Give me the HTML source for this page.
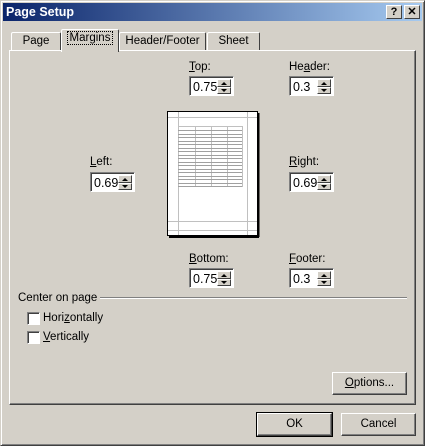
<!DOCTYPE html><html><head><style>
*{margin:0;padding:0;box-sizing:border-box}
body{width:425px;height:446px;background:#d4d0c8;font-family:"Liberation Sans",sans-serif;font-size:11.5px;color:#000;position:relative;overflow:hidden}
.a{position:absolute}
.frame{left:0;top:0;width:425px;height:446px;border:1px solid;border-color:#d4d0c8 #404040 #404040 #d4d0c8;box-shadow:inset 1px 1px #fff,inset -1px -1px #808080}
.title{left:3px;top:3px;width:419px;height:18px;background:linear-gradient(90deg,#0a246a,#a6caf0);color:#fff;font-weight:bold;font-size:12.5px;padding:2px 0 0 3px}
.tb{width:16px;height:14px;top:5px;background:#d4d0c8;border:1px solid;border-color:#fff #404040 #404040 #fff;font-weight:bold;font-size:11px;text-align:center;line-height:12px;color:#000}
.tab{top:32px;height:19px;border:1px solid;border-bottom:none;border-color:#fff #404040 #404040 #fff;border-radius:2px 2px 0 0;text-align:center;line-height:17px;background:#d4d0c8}
.panel{left:9px;top:50px;width:407px;height:355px;border:1px solid;border-color:#fff #404040 #404040 #fff;box-shadow:inset -1px -1px #808080}
.inp{width:45px;height:20px;background:#fff;border:1px solid;border-color:#808080 #fff #fff #808080;box-shadow:inset 1px 1px #404040;padding:3px 0 0 3px;font-size:12.5px;overflow:hidden;white-space:nowrap}
.sp{position:absolute;right:2px;top:2px;width:14px;height:15px;background:#d4d0c8}
.sp div{height:7.5px;border:1px solid;border-color:#fff #404040 #404040 #fff;position:relative}
.up:after,.dn:after{content:"";position:absolute;left:3px;top:1.5px;border-left:3px solid transparent;border-right:3px solid transparent}
.up:after{border-bottom:3px solid #000}
.dn:after{border-top:3px solid #000}
u{text-decoration:underline}
.btn{height:23px;border:1px solid;border-color:#fff #404040 #404040 #fff;box-shadow:inset -1px -1px #808080;text-align:center;line-height:20px}
.cb{width:13px;height:13px;background:#fff;border:1px solid;border-color:#808080 #fff #fff #808080;box-shadow:inset 1px 1px #404040}
</style></head><body>
<div class="a frame"></div>
<div class="a title">Page Setup</div>
<div class="a tb" style="left:386px">?</div>
<div class="a tb" style="left:404px">✕</div>
<div class="a tab" style="left:11px;width:50px">Page</div>
<div class="a tab" style="left:119px;width:87px">Header/Footer</div>
<div class="a tab" style="left:207px;width:53px">Sheet</div>
<div class="a panel"></div>
<div class="a tab" style="left:61px;width:58px;top:29px;height:23px;border-bottom:none;z-index:2"><span style="outline:1px dotted #000;padding:0 2px">Margins</span></div>

<div class="a" style="left:189px;top:61px"><u>T</u>op:</div>
<div class="a inp" style="left:189px;top:76px">0.75<div class="sp"><div class="up"></div><div class="dn"></div></div></div>
<div class="a" style="left:289px;top:61px">He<u>a</u>der:</div>
<div class="a inp" style="left:289px;top:76px">0.3<div class="sp"><div class="up"></div><div class="dn"></div></div></div>
<div class="a" style="left:90px;top:156px"><u>L</u>eft:</div>
<div class="a inp" style="left:90px;top:172px">0.699<div class="sp"><div class="up"></div><div class="dn"></div></div></div>
<div class="a" style="left:289px;top:156px"><u>R</u>ight:</div>
<div class="a inp" style="left:289px;top:172px">0.699<div class="sp"><div class="up"></div><div class="dn"></div></div></div>
<div class="a" style="left:189px;top:253px"><u>B</u>ottom:</div>
<div class="a inp" style="left:189px;top:268px">0.75<div class="sp"><div class="up"></div><div class="dn"></div></div></div>
<div class="a" style="left:289px;top:253px"><u>F</u>ooter:</div>
<div class="a inp" style="left:289px;top:268px">0.3<div class="sp"><div class="up"></div><div class="dn"></div></div></div>

<svg class="a" style="left:167px;top:111px" width="93" height="127">
<rect x="0.5" y="0.5" width="90" height="124" fill="#fff" stroke="#000"/>
<line x1="91.5" y1="2" x2="91.5" y2="126" stroke="#000" stroke-width="2"/>
<line x1="2" y1="126" x2="92" y2="126" stroke="#000" stroke-width="2"/>
<g stroke="#c0c0c0" stroke-width="1">
<line x1="11.5" y1="1" x2="11.5" y2="124"/><line x1="80.5" y1="1" x2="80.5" y2="124"/>
<line x1="1" y1="6.5" x2="90" y2="6.5"/><line x1="1" y1="110.5" x2="90" y2="110.5"/><line x1="1" y1="119.5" x2="90" y2="119.5"/>
<line x1="11" y1="15.5" x2="75" y2="15.5"/>
<line x1="28.5" y1="15" x2="28.5" y2="76"/><line x1="44.5" y1="15" x2="44.5" y2="76"/><line x1="60.5" y1="15" x2="60.5" y2="76"/><line x1="75.5" y1="15" x2="75.5" y2="76"/>
</g>
<g stroke="#a0a0a0">
<line x1="11" y1="19.5" x2="75" y2="19.5"/><line x1="11" y1="23.5" x2="75" y2="23.5"/><line x1="11" y1="26.5" x2="75" y2="26.5"/><line x1="11" y1="30.5" x2="75" y2="30.5"/><line x1="11" y1="33.5" x2="75" y2="33.5"/><line x1="11" y1="37.5" x2="75" y2="37.5"/><line x1="11" y1="40.5" x2="75" y2="40.5"/><line x1="11" y1="44.5" x2="75" y2="44.5"/><line x1="11" y1="47.5" x2="75" y2="47.5"/><line x1="11" y1="51.5" x2="75" y2="51.5"/><line x1="11" y1="54.5" x2="75" y2="54.5"/><line x1="11" y1="58.5" x2="75" y2="58.5"/><line x1="11" y1="61.5" x2="75" y2="61.5"/><line x1="11" y1="65.5" x2="75" y2="65.5"/><line x1="11" y1="68.5" x2="75" y2="68.5"/><line x1="11" y1="72.5" x2="75" y2="72.5"/><line x1="11" y1="75.5" x2="75" y2="75.5"/>
</g></svg>

<div class="a" style="left:18px;top:292px">Center on page</div>
<div class="a" style="left:100px;top:297px;width:307px;height:2px;border-top:1px solid #808080;border-bottom:1px solid #fff"></div>
<div class="a cb" style="left:27px;top:312px"></div>
<div class="a" style="left:43px;top:312px">Hori<u>z</u>ontally</div>
<div class="a cb" style="left:27px;top:331px"></div>
<div class="a" style="left:43px;top:331px"><u>V</u>ertically</div>
<div class="a btn" style="left:332px;top:372px;width:75px"><u>O</u>ptions...</div>
<div class="a btn" style="left:257px;top:413px;width:75px;outline:1px solid #000">OK</div>
<div class="a btn" style="left:341px;top:413px;width:75px">Cancel</div>
</body></html>
